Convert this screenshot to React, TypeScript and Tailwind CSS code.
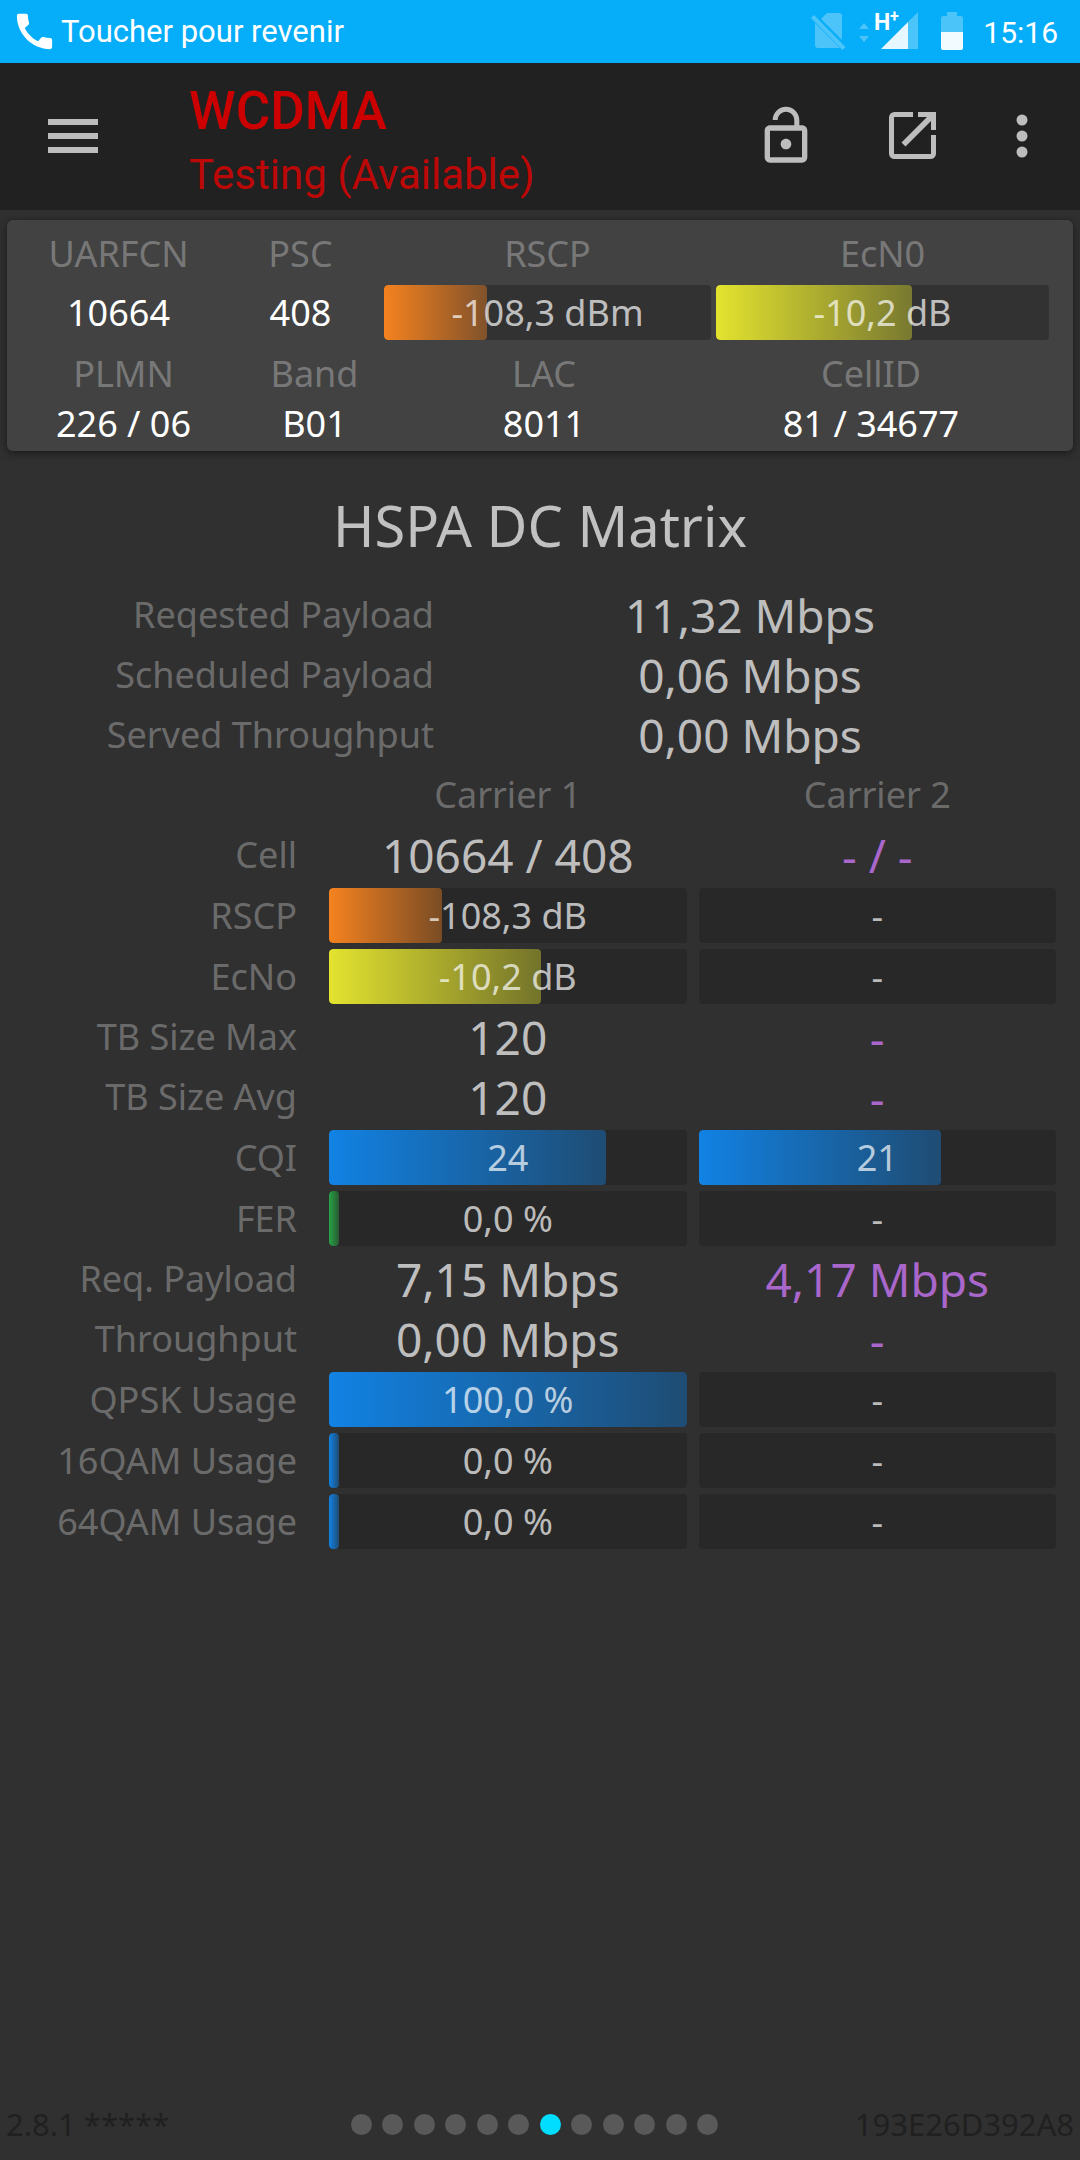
import { clsx } from "clsx";
import type { ReactNode } from "react";
import { MdCall } from "react-icons/md";

// ── Types and data ────────────────────────────────────────────

type Tone = "orange" | "yellow" | "blue" | "green";

interface Bar {
  text: string;
  tone?: Tone;
  percent?: number;
}

type Cell = string | Bar;

const TONES: Record<Tone, string> = {
  orange: "from-[#f5821f] to-[#f5821f]/40",
  yellow: "from-[#e3e32f] to-[#e3e32f]/40",
  blue: "from-[#1182e4] to-[#1182e4]/40",
  green: "from-[#27a344] to-[#27a344]/40",
};

const SIGNAL: { label: string; value: Cell }[] = [
  { label: "UARFCN", value: "10664" },
  { label: "PSC", value: "408" },
  { label: "RSCP", value: { text: "-108,3 dBm", tone: "orange", percent: 31.5 } },
  { label: "EcN0", value: { text: "-10,2 dB", tone: "yellow", percent: 59 } },
];

const NETWORK: { label: string; value: string }[] = [
  { label: "PLMN", value: "226 / 06" },
  { label: "Band", value: "B01" },
  { label: "LAC", value: "8011" },
  { label: "CellID", value: "81 / 34677" },
];

const TOTALS = [
  { label: "Reqested Payload", value: "11,32 Mbps" },
  { label: "Scheduled Payload", value: "0,06 Mbps" },
  { label: "Served Throughput", value: "0,00 Mbps" },
];

const EMPTY: Bar = { text: "-" };

const CARRIERS: { label: string; first: Cell; second: Cell }[] = [
  { label: "Cell", first: "10664 / 408", second: "- / -" },
  { label: "RSCP", first: { text: "-108,3 dB", tone: "orange", percent: 31.6 }, second: EMPTY },
  { label: "EcNo", first: { text: "-10,2 dB", tone: "yellow", percent: 59.2 }, second: EMPTY },
  { label: "TB Size Max", first: "120", second: "-" },
  { label: "TB Size Avg", first: "120", second: "-" },
  { label: "CQI", first: { text: "24", tone: "blue", percent: 77.4 }, second: { text: "21", tone: "blue", percent: 67.7 } },
  { label: "FER", first: { text: "0,0 %", tone: "green", percent: 2.8 }, second: EMPTY },
  { label: "Req. Payload", first: "7,15 Mbps", second: "4,17 Mbps" },
  { label: "Throughput", first: "0,00 Mbps", second: "-" },
  { label: "QPSK Usage", first: { text: "100,0 %", tone: "blue", percent: 100 }, second: EMPTY },
  { label: "16QAM Usage", first: { text: "0,0 %", tone: "blue", percent: 2.8 }, second: EMPTY },
  { label: "64QAM Usage", first: { text: "0,0 %", tone: "blue", percent: 2.8 }, second: EMPTY },
];

const PAGE_COUNT = 12;
const ACTIVE_PAGE = 6;

// ── Status bar ────────────────────────────────────────────────

function StatusBar() {
  return (
    <div className="flex h-[63px] items-center bg-[#06adf8] pl-[11px] pr-[22px] font-[Roboto,sans-serif] text-[31px] text-white">
      <MdCall className="size-[47px] shrink-0" />
      <span className="ml-[3px] pt-0.5">Toucher pour revenir</span>
      <svg className="ml-auto shrink-0" width="154" height="63" viewBox="0 0 154 63" fill="#fff">
        {/* no SIM */}
        <g opacity="0.28">
          <path d="M10 19L16 13H28a3 3 0 0 1 3 3V40z" />
          <path d="M4 23L29 48H7a3 3 0 0 1 -3 -3z" />
          <path d="M0 18L3 15L34.500 47L31.500 50z" />
          <path d="M48 29h10l-5 -6zM48 36h10l-5 6z" />
        </g>
        {/* signal */}
        <path d="M107 12V49H97V22z" opacity="0.28" />
        <path d="M97 22V49H70z" opacity="0.9" />
        <text x="63" y="30" fontSize="23" fontWeight="700">H</text>
        <text x="79" y="22" fontSize="16" fontWeight="700">+</text>
        {/* battery */}
        <path d="M136 12h10v4h4a2 2 0 0 1 2 2V32H130V18a2 2 0 0 1 2 -2h4z" opacity="0.28" />
        <path d="M130 32h22V48a2 2 0 0 1 -2 2H132a2 2 0 0 1 -2 -2z" opacity="0.95" />
      </svg>
      <time className="ml-[18px] pt-0.5 text-[30px]">15:16</time>
    </div>
  );
}

// ── Toolbar ───────────────────────────────────────────────────

function IconButton({ label, className, children }: { label: string; className?: string; children: ReactNode }) {
  return (
    <button type="button" aria-label={label} className={clsx("flex size-16 items-center justify-center", className)}>
      {children}
    </button>
  );
}

function Toolbar() {
  return (
    <header className="flex h-[147px] items-center bg-[#212121] pb-0.5 pl-[41px] pr-[26px] font-[Roboto,sans-serif] text-[#bdbdbd]">
      <IconButton label="Menu">
        <svg width="50" height="34" viewBox="0 0 50 34" fill="currentColor">
          <path d="M0 0h50v6H0zM0 14h50v6H0zM0 28h50v6H0z" />
        </svg>
      </IconButton>
      <div className="ml-[84px] grow pt-3.5">
        <h1 className="text-[53px] font-medium leading-[64px] text-[#cc0000]">WCDMA</h1>
        <p className="text-[42px] leading-[64px] text-[#bd0808]">Testing (Available)</p>
      </div>
      <IconButton label="Lock">
        <svg width="64" height="64" viewBox="0 0 24 24" fill="currentColor">
          <path d="M12 17c1.100 0 2-.9 2-2s-.9-2-2-2-2 .9-2 2 .9 2 2 2zm6-9h-1V6c0-2.760-2.240-5-5-5S7 3.240 7 6h1.900c0-1.710 1.390-3.100 3.100-3.100 1.710 0 3.100 1.390 3.100 3.100v2H6c-1.100 0-2 .9-2 2v10c0 1.100.9 2 2 2h12c1.100 0 2-.9 2-2V10c0-1.100-.9-2-2-2zm0 12H6V10h12v10z" />
        </svg>
      </IconButton>
      <IconButton label="Open in new window" className="ml-[62px]">
        <svg width="47" height="47" viewBox="0 0 47 47" fill="currentColor">
          <path d="M24 2.500H5.500a3 3 0 0 0 -3 3V41.500a3 3 0 0 0 3 3H41.500a3 3 0 0 0 3 -3V23" fill="none" stroke="currentColor" strokeWidth="5" />
          <path d="M29 0H47V18H42V9L16.500 34.500L12.500 30.500L38 5H29z" />
        </svg>
      </IconButton>
      <IconButton label="More options" className="ml-[46px]">
        <svg width="12" height="44" viewBox="0 0 12 44" fill="currentColor">
          <circle cx="6" cy="6" r="5.500" />
          <circle cx="6" cy="22" r="5.500" />
          <circle cx="6" cy="38" r="5.500" />
        </svg>
      </IconButton>
    </header>
  );
}

// ── Gauges and cells ──────────────────────────────────────────

function Gauge({ bar, className }: { bar: Bar; className: string }) {
  return (
    <div className={clsx("relative flex h-[55px] items-center justify-center overflow-hidden rounded", className)}>
      {bar.tone && (
        <div
          className={clsx("absolute inset-y-0 left-0 rounded bg-linear-to-r", TONES[bar.tone])}
          style={{ width: `${bar.percent}%` }}
        />
      )}
      <span className="relative text-[36px] leading-[55px] text-white/70">{bar.text}</span>
    </div>
  );
}

function CarrierCell({ cell, empty }: { cell: Cell; empty?: boolean }) {
  if (typeof cell === "string") {
    return (
      <td className={clsx("p-0 text-center text-[46px] leading-[60px]", empty ? "text-[#a966cb]" : "text-white/70")}>
        {cell}
      </td>
    );
  }
  return (
    <td className="px-1.5 py-[3px]">
      <Gauge bar={cell} className="bg-[#282828]" />
    </td>
  );
}

// ── Cards and tables ──────────────────────────────────────────

function CellCard() {
  return (
    <section className="mx-[7px] mt-2.5 rounded-md bg-[#424242] pb-0.5 pl-[13px] pt-2 text-center text-[36px] shadow-[0_2px_8px_rgba(0,0,0,0.5)]">
      <dl className="grid grid-cols-[197fr_157fr_327fr_333fr] gap-x-[5px] pr-6">
        {SIGNAL.map(({ label, value }) => (
          <div key={label}>
            <dt className="leading-[52px] text-white/30">{label}</dt>
            <dd className="mt-[5px] leading-[55px] text-white">
              {typeof value === "string" ? value : <Gauge bar={value} className="bg-[#323232]" />}
            </dd>
          </div>
        ))}
      </dl>
      <dl className="mt-2 grid grid-cols-[207fr_175fr_284fr_370fr] pr-[17px]">
        {NETWORK.map(({ label, value }) => (
          <div key={label}>
            <dt className="leading-[51px] text-white/30">{label}</dt>
            <dd className="leading-[50px] text-white">{value}</dd>
          </div>
        ))}
      </dl>
    </section>
  );
}

function Totals() {
  return (
    <table className="mt-6 w-full table-fixed border-collapse">
      <tbody>
        {TOTALS.map(({ label, value }) => (
          <tr key={label} className="h-[60px]">
            <th scope="row" className="w-[438px] p-0 pr-1 text-right text-[36px] font-normal leading-[60px] text-white/30">
              {label}
            </th>
            <td className="p-0 text-center text-[46px] leading-[60px] text-white/70">{value}</td>
          </tr>
        ))}
      </tbody>
    </table>
  );
}

function CarrierTable() {
  return (
    <table className="w-full table-fixed border-collapse">
      <thead>
        <tr className="h-[60px] text-[36px] leading-[60px] text-white/30">
          <td className="w-[323px] p-0" />
          <th scope="col" className="p-0 font-normal">Carrier 1</th>
          <th scope="col" className="p-0 font-normal">Carrier 2</th>
        </tr>
      </thead>
      <tbody>
        {CARRIERS.map(({ label, first, second }) => (
          <tr key={label}>
            <th scope="row" className="p-0 pr-[26px] text-right text-[36px] font-normal leading-[60px] text-white/30">
              {label}
            </th>
            <CarrierCell cell={first} />
            <CarrierCell cell={second} empty />
          </tr>
        ))}
      </tbody>
    </table>
  );
}

// ── Footer ────────────────────────────────────────────────────

function Footer() {
  return (
    <footer className="mt-auto grid h-[72px] grid-cols-[1fr_auto_1fr] items-center px-1.5 text-[31px] text-[#202020]">
      <span>2.8.1 *****</span>
      <div className="pr-[11px]">
        <div className="flex w-[367px] justify-between">
          {Array.from({ length: PAGE_COUNT }, (_, i) => (
            <span key={i} className={clsx("size-[21px] rounded-full", i === ACTIVE_PAGE ? "bg-[#00ddff]" : "bg-[#595959]")} />
          ))}
        </div>
      </div>
      <span className="text-right">193E26D392A8</span>
    </footer>
  );
}

export default function App() {
  return (
    <div className="flex min-h-screen flex-col bg-[#303030] font-['Noto_Sans','Open_Sans',sans-serif]">
      <StatusBar />
      <Toolbar />
      <main>
        <CellCard />
        <h2 className="mt-[38px] text-center text-[56px] leading-[72px] text-white/70">HSPA DC Matrix</h2>
        <div className="pr-[18px]">
          <Totals />
          <CarrierTable />
        </div>
      </main>
      <Footer />
    </div>
  );
}
